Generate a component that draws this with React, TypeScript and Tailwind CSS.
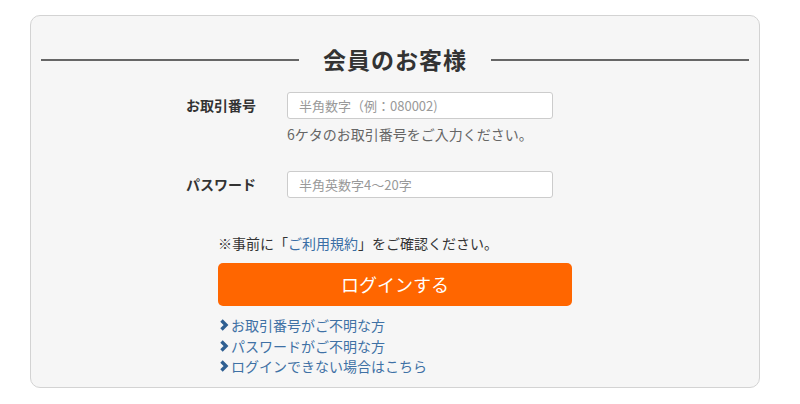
import React from "react";

const Chevron = () => (
  <svg width="10" height="12" viewBox="0 0 10 12" className="shrink-0 mr-[2px]">
    <polyline points="2.5,1.5 7,6 2.5,10.5" fill="none" stroke="#2f5f92" strokeWidth="3.4" strokeLinejoin="miter" />
  </svg>
);

export default function App() {
  const font = { fontFamily: '"Noto Sans CJK JP", "Noto Sans", sans-serif' };
  return (
    <div className="w-[800px] h-[404px] bg-white pt-[15px] pl-[30px]" style={font}>
      <div className="w-[730px] h-[373px] border border-[#d3d3d3] rounded-[10px] bg-[#f6f6f6] flex flex-col">
        <div className="mt-[26px] h-[34px] px-[10px] flex items-center">
          <div className="flex-1 h-[2px] bg-[#666] mt-[2px]" />
          <div className="mx-[24px] text-[23px] font-bold text-[#333] leading-none tracking-[1px]">会員のお客様</div>
          <div className="flex-1 h-[2px] bg-[#666] mt-[2px]" />
        </div>

        <div className="mt-[16px] ml-[155px] flex items-center">
          <div className="w-[101px] text-[14px] font-bold text-[#333]">お取引番号</div>
          <div className="w-[266px] h-[27px] bg-white border border-[#ccc] rounded-[3px] flex items-center pl-[11px] text-[13px] text-[#999]">
            半角数字（例：080002)
          </div>
        </div>
        <div className="mt-[5px] ml-[256px] text-[14px] leading-[20px] text-[#666]">
          6ケタのお取引番号をご入力ください。
        </div>

        <div className="mt-[27px] ml-[155px] flex items-center">
          <div className="w-[101px] text-[14px] font-bold text-[#333]">パスワード</div>
          <div className="w-[266px] h-[27px] bg-white border border-[#ccc] rounded-[3px] flex items-center pl-[11px] text-[13px] text-[#999]">
            半角英数字4～20字
          </div>
        </div>

        <div className="mt-[35px] ml-[187px] text-[14px] leading-[20px] text-[#333]">
          ※事前に「<span className="text-[#3a6ea5]">ご利用規約</span>」をご確認ください。
        </div>

        <div className="mt-[10px] ml-[187px] w-[354px] h-[43px] bg-[#ff6600] rounded-[5px] flex items-center justify-center text-white text-[18px]">
          ログインする
        </div>

        <div className="mt-[9px] ml-[188px] flex flex-col text-[14px] leading-[20.5px] text-[#3f71a5]">
          <div className="flex items-center"><Chevron />お取引番号がご不明な方</div>
          <div className="flex items-center"><Chevron />パスワードがご不明な方</div>
          <div className="flex items-center"><Chevron />ログインできない場合はこちら</div>
        </div>
      </div>
    </div>
  );
}
